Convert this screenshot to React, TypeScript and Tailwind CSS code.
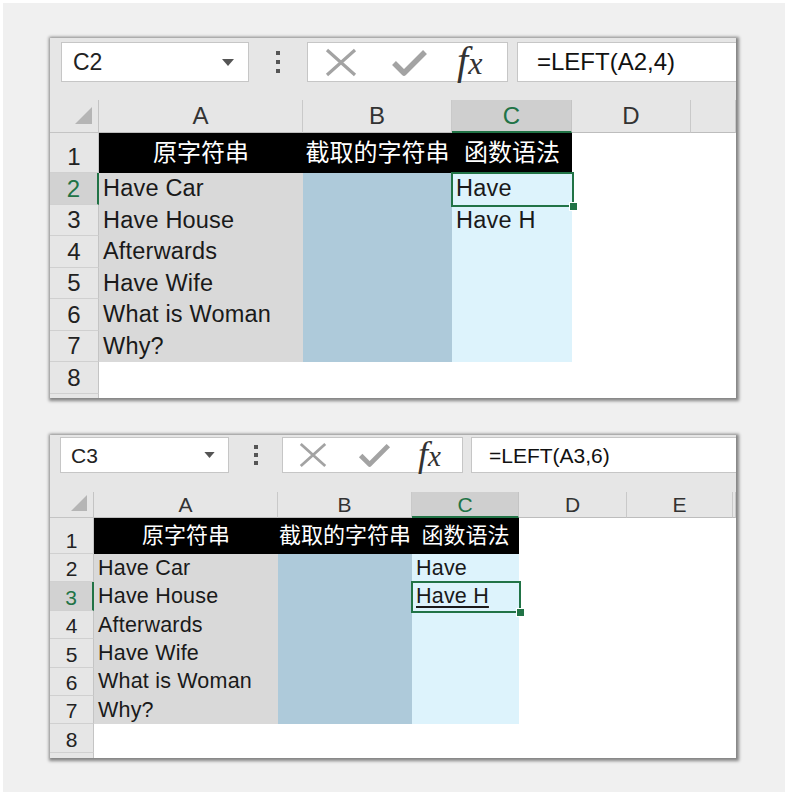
import React from "react";

type Cfg = {
  box: string;
  toolbar: string;
  nameBox: string;
  nameText: string;
  tri: string;
  dotsArea: string;
  dot: string;
  btnBox: string;
  xIcon: string;
  checkIcon: string;
  fxWrap: string;
  fxF: string;
  fxX: string;
  formula: string;
  grid: string;
  headerH: string;
  hdrFont: string;
  cornerPad: string;
  cornerTri: string;
  row1H: string;
  rowH: string;
  cellFont: string;
  cellPad: string;
  cjkFont: string;
  rowNumPad: string;
  letters: string[];
  name: string;
  formulaText: string;
  active: number;
  underline: boolean;
  handle: string;
};

const cfg1: Cfg = {
  box: "w-[686px] h-[360px]",
  toolbar: "pt-[4px] pb-[18px] pl-[11px]",
  nameBox: "w-[188px] h-[40px] pl-[11px] pr-[14px]",
  nameText: "text-[23px]",
  tri: "w-[12px] h-[7px]",
  dotsArea: "w-[58px] gap-[5px]",
  dot: "w-[4px] h-[4px]",
  btnBox: "w-[201px] h-[40px]",
  xIcon: "ml-[17px] w-[32px] h-[29px]",
  checkIcon: "ml-[34px] w-[37px] h-[29px]",
  fxWrap: "ml-[29px] pb-[2px]",
  fxF: "text-[40px]",
  fxX: "text-[32px]",
  formula: "ml-[9px] h-[40px] pl-[19px] text-[24px]",
  grid: "grid-cols-[49px_204px_149px_120px_119px_1fr]",
  headerH: "h-[33px]",
  hdrFont: "text-[24px]",
  cornerPad: "pr-[6px] pb-[8px]",
  cornerTri: "w-[17px] h-[17px]",
  row1H: "h-[40px]",
  rowH: "h-[31.5px]",
  cellFont: "text-[23.5px] tracking-[0.2px]",
  cellPad: "pl-[4px] pb-[4px]",
  cjkFont: "text-[24px]",
  rowNumPad: "pb-[3px]",
  letters: ["A", "B", "C", "D", ""],
  name: "C2",
  formulaText: "=LEFT(A2,4)",
  active: 2,
  underline: false,
  handle: "w-[9px] h-[9px] -right-[6px] -bottom-[6px]",
};

const cfg2: Cfg = {
  box: "w-[686px] h-[323px]",
  toolbar: "pt-[2px] pb-[19px] pl-[10px]",
  nameBox: "w-[169px] h-[36px] pl-[10px] pr-[13px]",
  nameText: "text-[21px]",
  tri: "w-[11px] h-[6px]",
  dotsArea: "w-[53px] gap-[4px]",
  dot: "w-[4px] h-[4px]",
  btnBox: "w-[181px] h-[36px]",
  xIcon: "ml-[16px] w-[28px] h-[26px]",
  checkIcon: "ml-[31px] w-[33px] h-[26px]",
  fxWrap: "ml-[27px] pb-[2px]",
  fxF: "text-[36px]",
  fxX: "text-[29px]",
  formula: "ml-[8px] h-[36px] pl-[17px] text-[21px]",
  grid: "grid-cols-[44px_184px_134px_107px_108px_106px_1fr]",
  headerH: "h-[26px]",
  hdrFont: "text-[21px]",
  cornerPad: "pr-[6px] pb-[6px]",
  cornerTri: "w-[16px] h-[16px]",
  row1H: "h-[36px]",
  rowH: "h-[28.4px]",
  cellFont: "text-[21.5px] tracking-[0.2px]",
  cellPad: "pl-[4px] pb-[3px]",
  cjkFont: "text-[22px]",
  rowNumPad: "pb-[2px]",
  letters: ["A", "B", "C", "D", "E", ""],
  name: "C3",
  formulaText: "=LEFT(A3,6)",
  active: 3,
  underline: true,
  handle: "w-[9px] h-[9px] -right-[6px] -bottom-[6px]",
};

const FONT = "font-['Liberation_Sans','Noto_Sans_CJK_SC',Arial,sans-serif]";

const colA = ["Have Car", "Have House", "Afterwards", "Have Wife", "What is Woman", "Why?"];
const colC = ["Have", "Have H", "", "", "", ""];
const head = ["原字符串", "截取的字符串", "函数语法"];

function Toolbar({ c }: { c: Cfg }) {
  return (
    <div className={`flex items-start bg-[#e6e6e6] ${c.toolbar}`}>
      <div className={`flex items-center justify-between bg-white border border-[#c6c6c6] ${c.nameBox}`}>
        <span className={`${c.nameText} text-[#222] leading-none`}>{c.name}</span>
        <svg viewBox="0 0 12 7" className={c.tri}>
          <polygon points="0,0 12,0 6,7" fill="#555" />
        </svg>
      </div>
      <div className={`flex flex-col items-center justify-center self-stretch ${c.dotsArea}`}>
        <div className={`${c.dot} bg-[#555]`} />
        <div className={`${c.dot} bg-[#555]`} />
        <div className={`${c.dot} bg-[#555]`} />
      </div>
      <div className={`flex items-center bg-white border border-[#c6c6c6] ${c.btnBox}`}>
        <svg viewBox="0 0 32 29" className={c.xIcon}>
          <path d="M2 2 L30 27 M30 2 L2 27" stroke="#a3a3a3" strokeWidth="3.2" fill="none" />
        </svg>
        <svg viewBox="0 0 37 29" className={c.checkIcon}>
          <path d="M3 15 L13 25 L34 4" stroke="#a3a3a3" strokeWidth="5.5" fill="none" strokeLinejoin="round" />
        </svg>
        <span className={`font-['Liberation_Serif',serif] italic text-[#333] leading-none ${c.fxWrap}`}>
          <span className={c.fxF}>f</span>
          <span className={c.fxX}>x</span>
        </span>
      </div>
      <div className={`flex-1 flex items-center bg-white border border-r-0 border-[#c6c6c6] text-[#111] ${c.formula}`}>
        <span className="leading-none">{c.formulaText}</span>
      </div>
    </div>
  );
}

function HeaderRow({ c }: { c: Cfg }) {
  return (
    <div className={`grid ${c.grid} ${c.headerH} bg-[#e6e6e6]`}>
      <div className={`flex items-end justify-end border-r border-b border-[#c4c4c4] ${c.cornerPad}`}>
        <svg viewBox="0 0 17 17" className={c.cornerTri}>
          <polygon points="17,0 17,17 0,17" fill="#b5b5b5" />
        </svg>
      </div>
      {c.letters.map((l, i) =>
        i === 2 ? (
          <div
            key={i}
            className={`flex items-center justify-center bg-[#cfcfcf] border-r border-[#c4c4c4] border-b-2 border-b-[#217346] text-[#217346] ${c.hdrFont}`}
          >
            <span className="leading-none">{l}</span>
          </div>
        ) : (
          <div
            key={i}
            className={`flex items-center justify-center border-r border-b border-[#c9c9c9] border-b-[#bdbdbd] text-[#333] ${c.hdrFont}`}
          >
            <span className="leading-none">{l}</span>
          </div>
        )
      )}
    </div>
  );
}

function RowHead({ c, n, h, label }: { c: Cfg; n: number; h: string; label?: boolean }) {
  const sel = n === c.active;
  return (
    <div
      className={`flex items-end justify-center ${h} ${c.hdrFont} ${c.rowNumPad} border-b border-[#d0d0d0] ${
        sel
          ? "bg-[#d2d2d2] text-[#217346] border-r-2 border-r-[#217346]"
          : "bg-[#e6e6e6] text-[#222] border-r border-r-[#c4c4c4]"
      }`}
    >
      {label !== false && <span className="leading-none">{n}</span>}
    </div>
  );
}

function Sheet({ c }: { c: Cfg }) {
  const extra = c.letters.length - 3;
  return (
    <div className={`${c.box} ${FONT} shrink-0 bg-white overflow-hidden shadow-[1px_1px_3px_2px_rgba(0,0,0,0.45)]`}>
      <Toolbar c={c} />
      <HeaderRow c={c} />
      <div className={`grid ${c.grid}`}>
        <RowHead c={c} n={1} h={c.row1H} />
        {head.map((t, i) => (
          <div
            key={i}
            className={`${c.row1H} bg-black text-white flex items-center justify-center whitespace-nowrap ${c.cjkFont}`}
          >
            <span className="leading-none">{t}</span>
          </div>
        ))}
        {Array.from({ length: extra }).map((_, i) => (
          <div key={i} className={`${c.row1H} bg-white`} />
        ))}
      </div>
      {colA.map((a, r) => {
        const n = r + 2;
        const act = n === c.active;
        return (
          <div key={n} className={`grid ${c.grid} relative ${act ? "z-10" : ""}`}>
            <RowHead c={c} n={n} h={c.rowH} />
            <div className={`${c.rowH} bg-[#d9d9d9] flex items-end whitespace-nowrap text-[#1a1a1a] ${c.cellFont} ${c.cellPad}`}>
              <span className="leading-none">{a}</span>
            </div>
            <div className={`${c.rowH} bg-[#aecada]`} />
            <div
              className={`${c.rowH} relative bg-[#ddf3fc] flex items-end whitespace-nowrap text-[#1a1a1a] ${c.cellFont} ${c.cellPad}`}
            >
              <span className={`leading-none ${act && c.underline ? "underline underline-offset-[3px]" : ""}`}>
                {colC[r]}
              </span>
              {act && (
                <>
                  <div className="absolute -left-[1px] -top-[1px] -right-[2px] -bottom-[2px] border-2 border-[#217346]" />
                  <div className={`absolute bg-[#217346] border border-white ${c.handle}`} />
                </>
              )}
            </div>
            {Array.from({ length: extra }).map((_, i) => (
              <div key={i} className={`${c.rowH} bg-white`} />
            ))}
          </div>
        );
      })}
      {[8, 9].map((n) => (
        <div key={n} className={`grid ${c.grid}`}>
          <RowHead c={c} n={n} h={c.rowH} label={n === 8} />
          {Array.from({ length: extra + 3 }).map((_, i) => (
            <div key={i} className={`${c.rowH} bg-white`} />
          ))}
        </div>
      ))}
    </div>
  );
}

export default function App() {
  return (
    <div className="w-[788px] h-[795px] bg-white pt-[3px] pl-[3px]">
      <div className="w-[782px] h-[789px] bg-[#f0f0f0] pl-[47px] pt-[35px] flex flex-col gap-[37px]">
        <Sheet c={cfg1} />
        <Sheet c={cfg2} />
      </div>
    </div>
  );
}
